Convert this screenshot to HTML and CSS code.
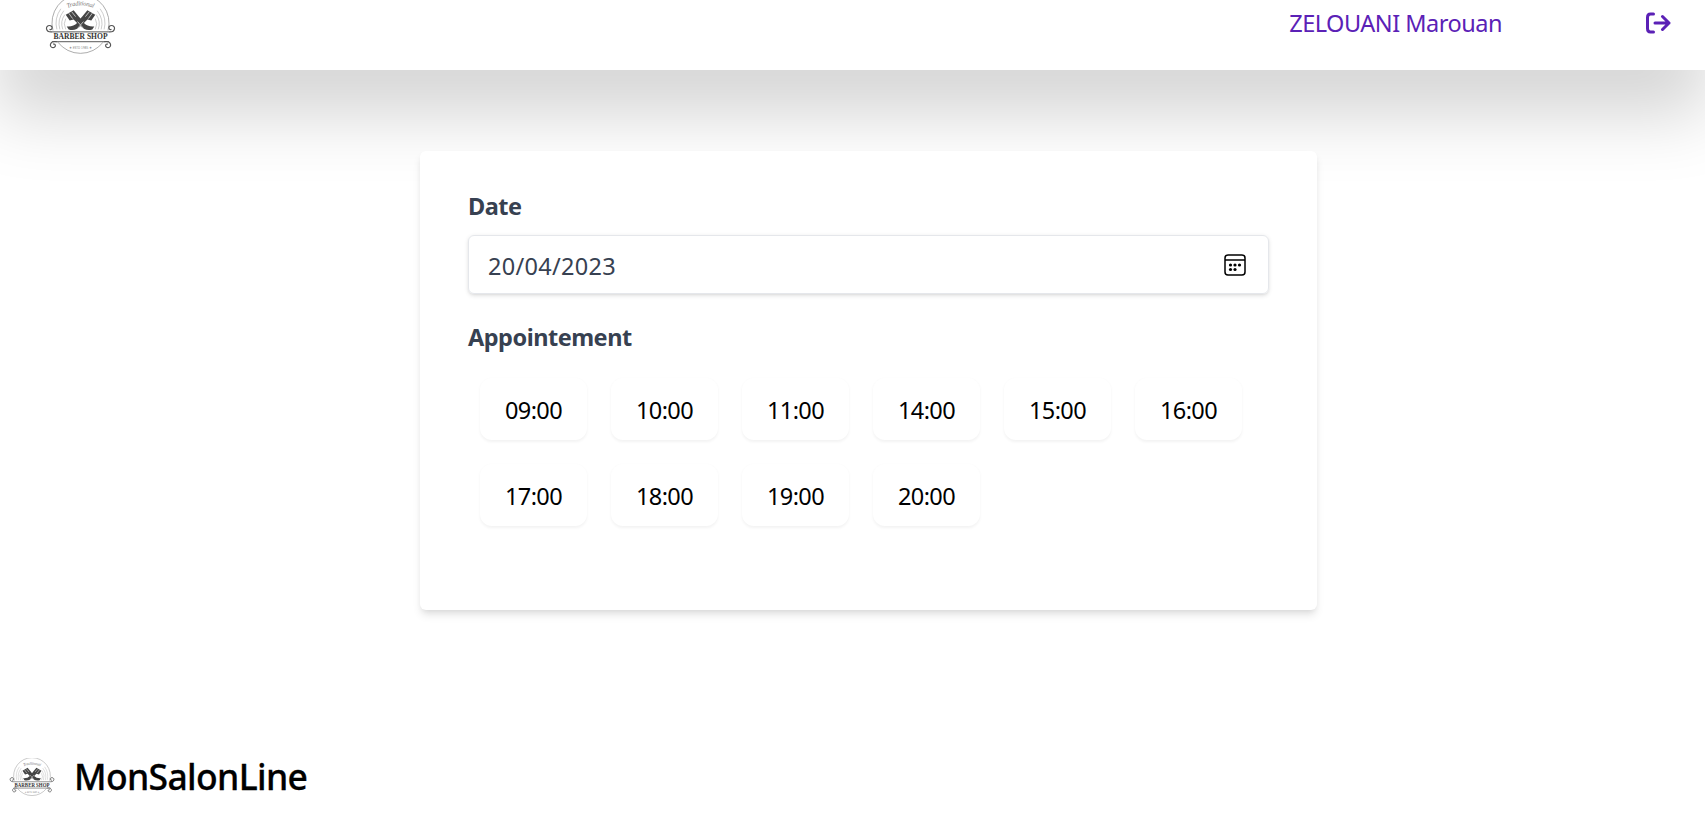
FILE: index.html
```html
<!DOCTYPE html>
<html lang="fr">
<head>
<meta charset="utf-8">
<title>MonSalonLine</title>
<link rel="stylesheet" href="styles.css">
</head>
<body>
<svg width="0" height="0" class="defs">
  <symbol id="logo" viewBox="0 0 72 60">
    <g fill="none" stroke="#555" stroke-width=".7">
      <path d="M8 36A29 29 0 1 1 64 36M13 48A29 29 0 0 0 59 48" stroke="#888"/>
      <path d="M12 35Q9 24 16 14M15 35Q12 25 19 16M18 35Q15 27 20 20M21 35Q18 29 21 24M60 35Q63 24 56 14M57 35Q60 25 53 16M54 35Q57 27 52 20M51 35Q54 29 51 24" stroke="#aaa" stroke-width=".6"/>
      <path d="M7 37.5H65M7 47.500H65" stroke-width="1"/>
      <path d="M7 37.500C0 38 0 31 4.500 31C8 31 8 36 4.500 35M65 37.500C72 38 72 31 67.500 31C64 31 64 36 67.500 35M12 47.500C4 46 4 53.500 8 53.500C11.500 53.500 11 49 8 50M60 47.500C68 46 68 53.500 64 53.500C60.500 53.500 61 49 64 50" stroke-width="1.200"/>
    </g>
    <path d="M21 20L29 15.500L34 21.500L36 24L38 21.500L43 15.500L51 20L47 26L43 25L39.500 28.500Q43 32.500 50 32L48 35Q41 37 36 31.500Q31 37 24 35L22 32Q29 32.500 32.500 28.500L29 25L25 26Z" fill="#444"/>
    <path d="M24 18.500L28 24M27 17L31 22M48 18.500L44 24M45 17L41 22M33 27L39 34M39 27L33 34" stroke="#ddd" stroke-width=".8"/>
    <path id="arch" d="M20 14.500Q36 6.500 52 14.500" fill="none"/>
    <text class="logo-script"><textPath href="#arch" startOffset="50%" textLength="27">Traditional</textPath></text>
    <text x="36" y="45.200" class="logo-name" textLength="55" lengthAdjust="spacingAndGlyphs">BARBER SHOP</text>
    <text x="36" y="54.500" class="logo-year" textLength="23" lengthAdjust="spacingAndGlyphs">★ ESTD 1985 ★</text>
  </symbol>
</svg>
<header class="topbar">
  <svg class="topbar-logo"><use href="#logo"/></svg>
  <nav class="account">
    <a class="user">ZELOUANI Marouan</a>
    <svg class="logout" viewBox="0 0 26 22" fill="none" stroke="#5b21b6" stroke-width="3" stroke-linecap="round" stroke-linejoin="round"><path d="M8.500 2H5.500Q2.500 2 2.500 5.500V16.500Q2.500 20 5.500 20H8.500M10 11H24M17.500 4.500L24 11L17.500 17.500"/></svg>
  </nav>
</header>
<main class="card">
  <label class="label">Date</label>
  <div class="date-input">
    <span class="date-value">20/04/2023</span>
    <svg class="calendar" viewBox="0 0 22 22"><rect x="1" y="1" width="20" height="20" rx="3" fill="none" stroke="#000" stroke-width="1.500"/><path d="M1 6H21" stroke="#000" stroke-width="1.500"/><g><circle cx="6.500" cy="11" r="1.600"/><circle cx="11" cy="11" r="1.600"/><circle cx="15.500" cy="11" r="1.600"/><circle cx="6.500" cy="15.500" r="1.600"/><circle cx="11" cy="15.500" r="1.600"/></g></svg>
  </div>
  <label class="label appointment">Appointement</label>
  <div class="slots">
    <button class="slot">09:00</button>
    <button class="slot">10:00</button>
    <button class="slot">11:00</button>
    <button class="slot">14:00</button>
    <button class="slot">15:00</button>
    <button class="slot">16:00</button>
    <button class="slot">17:00</button>
    <button class="slot">18:00</button>
    <button class="slot">19:00</button>
    <button class="slot">20:00</button>
  </div>
</main>
<footer class="footer">
  <svg class="footer-logo"><use href="#logo"/></svg>
  <span class="brand">MonSalonLine</span>
</footer>
</body>
</html>
```
FILE: styles.css
```css
* { box-sizing: border-box; }
body {
  margin: 0;
  height: 828px;
  overflow: hidden;
  display: flex;
  flex-direction: column;
  background: #fff;
  font-family: "Noto Sans", sans-serif;
  font-size: 23.5px;
  line-height: 36px;
}
.defs { position: absolute; overflow: visible; }
.topbar {
  flex: none;
  height: 96px;
  margin-top: -26px;
  padding: 21px 34px 0 45px;
  display: flex;
  justify-content: space-between;
  align-items: flex-start;
  background: #fff;
  box-shadow: 0 41px 68px 4px rgba(0, 0, 0, .17);
}
.topbar-logo { width: 71px; height: 59px; }
.account { display: flex; gap: 143px; color: #5b21b6; margin-top: 10px; }
.user { letter-spacing: -.5px; }
.logout { width: 26px; height: 22px; margin-top: 7px; }
.card {
  position: relative;
  flex: none;
  width: 897px;
  height: 459px;
  margin: 81px 0 0 420px;
  padding: 37px 48px 0;
  display: flex;
  flex-direction: column;
  background: #fff;
  border-radius: 6px;
  box-shadow: 0 6px 9px -1.5px rgba(0, 0, 0, .1), 0 3px 6px -3px rgba(0, 0, 0, .1);
}
.label { color: #374151; font-weight: 700; letter-spacing: -.5px; }
.date-input {
  height: 59px;
  margin-top: 11px;
  padding: 0 22px 0 19px;
  display: flex;
  align-items: center;
  justify-content: space-between;
  color: #374151;
  border: 1px solid #e5e7eb;
  border-radius: 6px;
  box-shadow: 0 1.5px 4.5px rgba(0, 0, 0, .1), 0 1.5px 3px -1.5px rgba(0, 0, 0, .1);
}
.date-value { padding-top: 3px; letter-spacing: .3px; }
.calendar { width: 22px; height: 22px; }
.appointment { margin-top: 25px; }
.slots {
  margin: 23px 12px 0;
  display: grid;
  grid-template-columns: repeat(6, 107px);
  gap: 24px;
}
.slot {
  height: 62px;
  padding: 1px 0 0;
  border: 0;
  border-radius: 12px;
  background: #fff;
  color: #000;
  font: inherit;
  letter-spacing: -.6px;
  box-shadow: 0 1.5px 3px rgba(0, 0, 0, .05);
}
.footer { display: flex; align-items: center; gap: 19px; margin: 140px 0 0 9px; }
.footer-logo { width: 46px; height: 38px; }
.brand { font-size: 35.5px; font-weight: 500; line-height: 52px; padding-bottom: 2px; letter-spacing: -.65px; -webkit-text-stroke: .3px #000; }
.logo-script { font: italic 6.5px "Liberation Serif", serif; fill: #777; text-anchor: middle; }
.logo-name { font: bold 8px "Liberation Serif", serif; fill: #333; text-anchor: middle; }
.logo-year { font: 4px "DejaVu Sans", sans-serif; fill: #888; text-anchor: middle; }
```
